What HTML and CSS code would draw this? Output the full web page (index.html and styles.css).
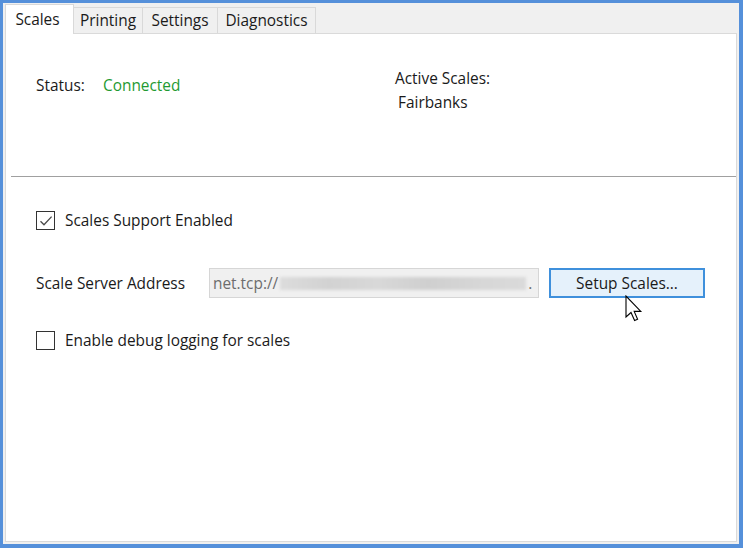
FILE: index.html
```html
<!DOCTYPE html>
<html>
<head>
<meta charset="utf-8">
<link rel="stylesheet" href="styles.css">
</head>
<body>
<div class="frame">
  <div class="tabs">
    <div class="tab active">Scales</div>
    <div class="tab w-print">Printing</div>
    <div class="tab w-set">Settings</div>
    <div class="tab w-diag">Diagnostics</div>
  </div>
  <div class="panel">
    <div class="top">
      <div class="status">
        <span class="status-label">Status:</span>
        <span class="connected">Connected</span>
      </div>
      <div class="active-scales">
        <div>Active Scales:</div>
        <div class="scale-name">Fairbanks</div>
      </div>
    </div>
    <div class="sep"></div>
    <div class="row check-row first">
      <span class="box checked">
        <svg width="16" height="16" viewBox="0 0 16 16"><path d="M2.5 8.2 L6 11.8 L13.6 3.6" fill="none" stroke="#4a4a4a" stroke-width="1.3"/></svg>
      </span>
      <span>Scales Support Enabled</span>
    </div>
    <div class="row addr-row">
      <span class="addr-label">Scale Server Address</span>
      <div class="textbox"><span>net.tcp://</span><span class="blur"></span><span>.</span></div>
      <div class="button">Setup Scales...
        <svg class="cursor" width="20" height="28" viewBox="0 0 20 28"><path d="M1 1 L1 22 L6 17.5 L9.6 25.5 L12.6 24.2 L9.2 16.4 L15.8 16.4 Z" fill="#fff" stroke="#000" stroke-width="1.1" stroke-linejoin="miter"/></svg>
      </div>
    </div>
    <div class="row check-row last">
      <span class="box"></span>
      <span>Enable debug logging for scales</span>
    </div>
  </div>
</div>
</body>
</html>
```
FILE: styles.css
```css
html, body {
  margin: 0;
  padding: 0;
}
body {
  font-family: "Open Sans", "Noto Sans", sans-serif;
  font-size: 15.4px;
  color: #1a1a1a;
}
.frame {
  width: 743px;
  height: 548px;
  box-sizing: border-box;
  border-style: solid;
  border-color: #5590da;
  border-width: 3px 4px 4px 3px;
  padding: 1px 2px 2px 2px;
  background: #f0f0f0;
  display: flex;
  flex-direction: column;
}
.tabs {
  display: flex;
  align-items: flex-end;
  height: 29px;
  flex: none;
}
.tab {
  box-sizing: border-box;
  height: 26px;
  border: 1px solid #d9d9d9;
  border-bottom: none;
  background: #f0f0f0;
  display: flex;
  align-items: center;
  justify-content: center;
  padding-bottom: 0;
  margin-left: -1px;
}
.tab.active {
  position: relative;
  z-index: 1;
  height: 30px;
  width: 69px;
  margin-left: 0;
  margin-bottom: -1px;
  background: #fff;
  padding: 0 4px 1px 0;
}
.w-print { width: 70px; }
.w-set { width: 76px; }
.w-diag { width: 99px; }
.panel {
  flex: 1;
  background: #fff;
  border: 1px solid #dadada;
}
.top {
  height: 142px;
  box-sizing: border-box;
  display: flex;
  padding: 36px 0 0 30px;
}
.status {
  width: 359px;
  margin-top: 5px;
  display: flex;
}
.status-label {
  width: 67px;
}
.connected {
  color: #1f9a32;
}
.active-scales {
  line-height: 18px;
}
.active-scales > div {
  height: 24px;
}
.scale-name {
  padding-left: 3px;
}
.sep {
  height: 1px;
  background: #a0a0a0;
  margin-left: 5px;
}
.row {
  display: flex;
  align-items: center;
  padding-left: 30px;
}
.check-row {
  gap: 10px;
  margin-top: 33px;
}
.check-row.last {
  margin-top: 32px;
}
.box {
  box-sizing: border-box;
  width: 19px;
  height: 19px;
  border: 1px solid #333;
  display: flex;
  align-items: center;
  justify-content: center;
}
.addr-row {
  margin-top: 37px;
}
.addr-label {
  width: 173px;
}
.textbox {
  box-sizing: border-box;
  width: 330px;
  height: 30px;
  border: 1px solid #d6d6d6;
  background: #f0f0f0;
  color: #6d6d6d;
  display: flex;
  align-items: center;
  padding-left: 3px;
}
.blur {
  display: inline-block;
  width: 246px;
  height: 13px;
  margin: 0 2px 0 2px;
  background: linear-gradient(90deg, #dcdcdc 0%, #d2d2d2 20%, #d8d8d8 40%, #cfcfcf 60%, #d6d6d6 80%, #dadada 100%);
  filter: blur(1.5px);
}
.button {
  position: relative;
  box-sizing: border-box;
  width: 156px;
  height: 30px;
  margin-left: 10px;
  border: 2px solid #3f90dc;
  background: #e5f1fb;
  display: flex;
  align-items: center;
  justify-content: center;
}
.cursor {
  position: absolute;
  left: 74px;
  top: 25px;
}
```
